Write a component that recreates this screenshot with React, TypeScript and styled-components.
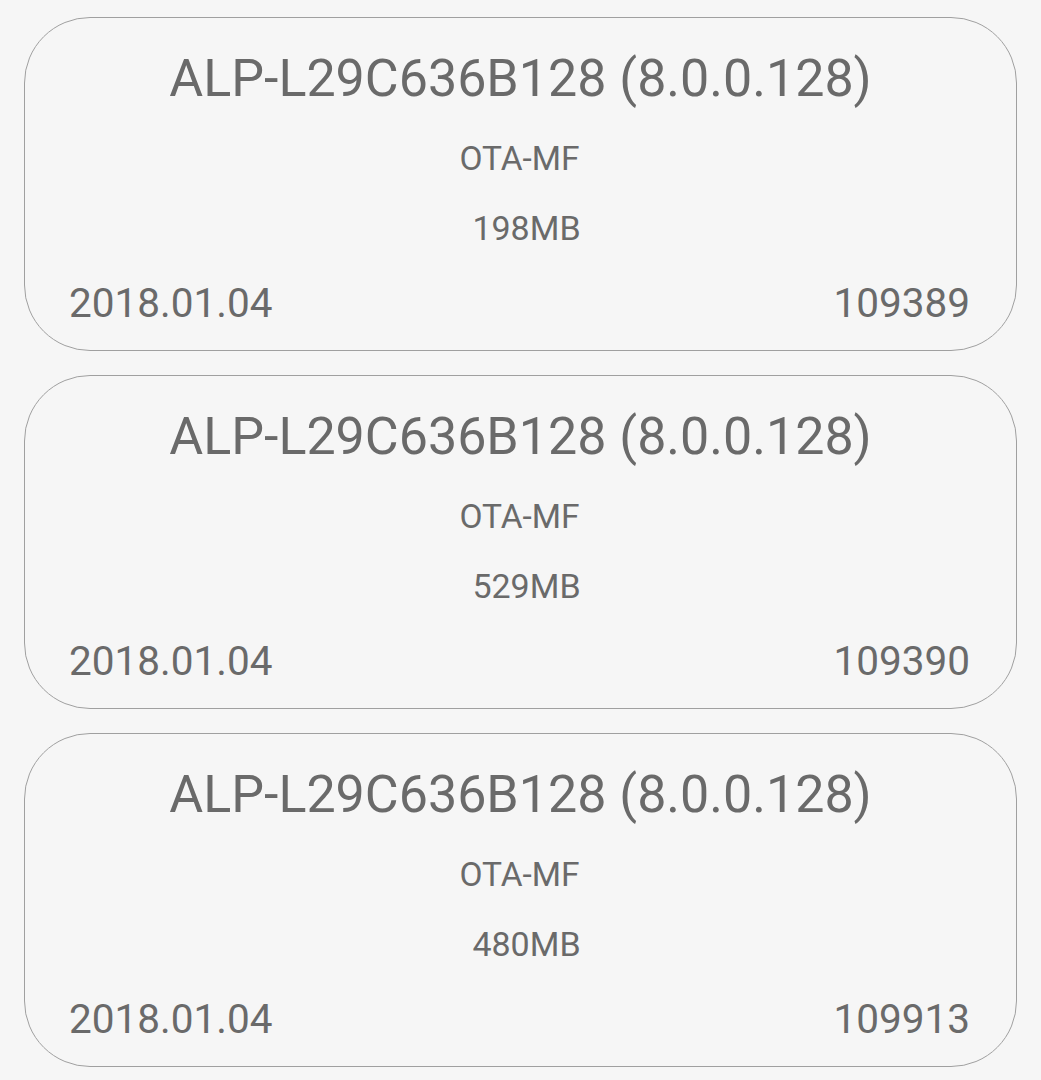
import React from 'react';
import styled, { createGlobalStyle } from 'styled-components';

interface IPackage {
  title: string
  kind: string
  size: string
  date: string
  id: string
}

const packages: IPackage[] = [
  { title: 'ALP-L29C636B128 (8.0.0.128)', kind: 'OTA-MF', size: '198MB', date: '2018.01.04', id: '109389' },
  { title: 'ALP-L29C636B128 (8.0.0.128)', kind: 'OTA-MF', size: '529MB', date: '2018.01.04', id: '109390' },
  { title: 'ALP-L29C636B128 (8.0.0.128)', kind: 'OTA-MF', size: '480MB', date: '2018.01.04', id: '109913' },
];

const GlobalStyle = createGlobalStyle`
  html, body {
    margin: 0;
    background: #f6f6f6;
  }
  body {
    font-family: Roboto, "Liberation Sans", sans-serif;
    color: #6a6a6a;
  }
`

const PackageCard = ({ item }: { item: IPackage }) => (
  <Card>
    <Title>{item.title}</Title>
    <Kind>{item.kind}</Kind>
    <Size>{item.size}</Size>
    <Footer>
      <span>{item.date}</span>
      <span>{item.id}</span>
    </Footer>
  </Card>
)

export default function App() {
  return (
    <>
      <GlobalStyle />
      <Page>
        {packages.map((p) => <PackageCard key={p.id} item={p} />)}
      </Page>
    </>
  )
}

const Page = styled.div`
  display: flex;
  flex-direction: column;
  gap: 24px;
  padding: 17px 24px 0 24px;
`
const Card = styled.div`
  box-sizing: border-box;
  height: 334px;
  display: flex;
  flex-direction: column;
  align-items: center;
  border: 1.5px solid #a0a0a0;
  border-radius: 66px;
  background: #f6f6f6;
  padding: 31px 46px 0 44px;
`
const Title = styled.div`
  font-size: 52px;
  line-height: 60px;
  white-space: nowrap;
  padding-left: 2px;
`
const Kind = styled.div`
  font-size: 33.5px;
  line-height: 40px;
  margin-top: 30px;
`
const Size = styled.div`
  font-size: 34px;
  line-height: 40px;
  margin-top: 29px;
  padding-left: 14px;
`
const Footer = styled.div`
  align-self: stretch;
  display: flex;
  justify-content: space-between;
  font-size: 40.5px;
  line-height: 48px;
  margin-top: 31px;
`
